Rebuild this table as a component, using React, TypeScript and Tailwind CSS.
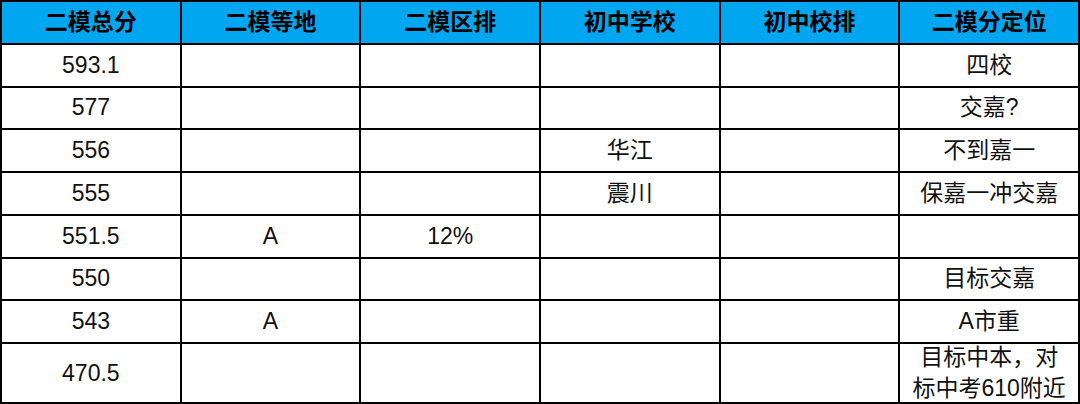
const headers = ['二模总分', '二模等地', '二模区排', '初中学校', '初中校排', '二模分定位']

const rows: string[][] = [
  ['593.1', '', '', '', '', '四校'],
  ['577', '', '', '', '', '交嘉?'],
  ['556', '', '', '华江', '', '不到嘉一'],
  ['555', '', '', '震川', '', '保嘉一冲交嘉'],
  ['551.5', 'A', '12%', '', '', ''],
  ['550', '', '', '', '', '目标交嘉'],
  ['543', 'A', '', '', '', 'A市重'],
  ['470.5', '', '', '', '', '目标中本，对\n标中考610附近'],
]

export default function App() {
  return (
    <div className="w-[1080px] h-[404px] bg-white overflow-hidden">
      <div
        className="grid grid-cols-6 grid-rows-[repeat(8,40.75px)_58px] gap-[2px] p-[2px] bg-black w-[1080px] h-[404px]"
        style={{ fontFamily: '"Liberation Sans", "Noto Sans CJK SC", sans-serif' }}
      >
        {headers.map((h) => (
          <div
            key={h}
            className="bg-[#00a6f0] flex items-center justify-center text-[23px] font-bold text-black"
          >
            {h}
          </div>
        ))}
        {rows.map((row, ri) =>
          row.map((cell, ci) => (
            <div
              key={`${ri}-${ci}`}
              className="bg-white flex items-center justify-center text-center text-[23px] leading-[31px] text-[#111] whitespace-pre-line"
            >
              {cell}
            </div>
          ))
        )}
      </div>
    </div>
  )
}
